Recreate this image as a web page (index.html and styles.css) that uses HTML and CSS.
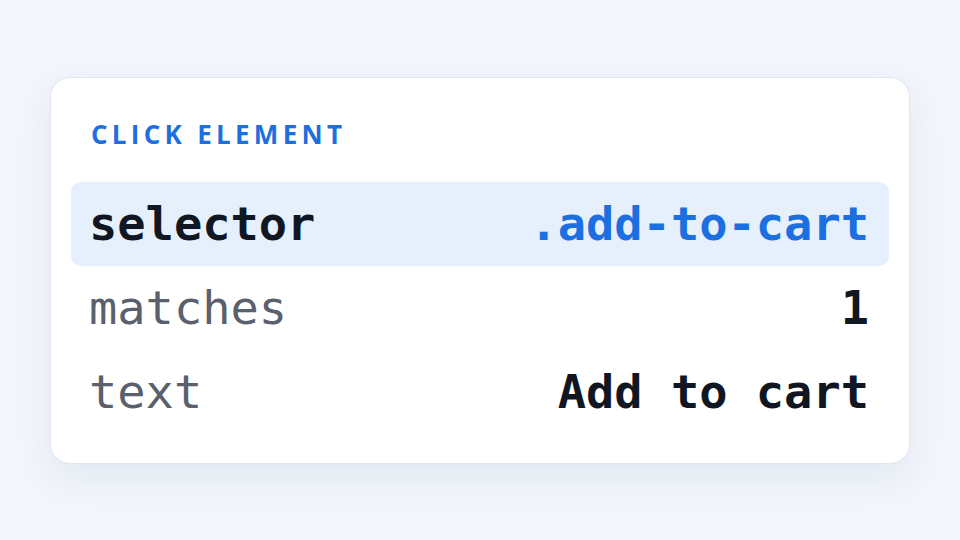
FILE: index.html
```html
<!DOCTYPE html>
<html lang="en">
<head>
<meta charset="utf-8">
<title>Click element</title>
<link rel="stylesheet" href="styles.css">
</head>
<body>
<main class="stage">
  <section class="card">
    <h1 class="title">CLICK ELEMENT</h1>
    <div class="rows">
      <div class="row row-active">
        <span class="key key-strong">selector</span>
        <span class="val val-accent">.add-to-cart</span>
      </div>
      <div class="row">
        <span class="key">matches</span>
        <span class="val">1</span>
      </div>
      <div class="row">
        <span class="key">text</span>
        <span class="val">Add to cart</span>
      </div>
    </div>
  </section>
</main>
</body>
</html>
```

FILE: styles.css
```css
html, body {
  margin: 0;
  padding: 0;
}
body {
  background: #f3f6fc;
  width: 960px;
  height: 540px;
  overflow: hidden;
}
.stage {
  width: 960px;
  height: 540px;
  display: flex;
  align-items: center;
  justify-content: center;
}
.card {
  box-sizing: border-box;
  width: 860px;
  height: 387px;
  background: #ffffff;
  border: 1px solid #e2e5eb;
  border-radius: 20px;
  box-shadow: 0 14px 40px rgba(30, 50, 90, 0.08);
  padding: 40px 20px 29px;
  display: flex;
  flex-direction: column;
}
.title {
  margin: 0 0 32px;
  padding-left: 20px;
  font-family: "Open Sans", "Noto Sans", sans-serif;
  font-weight: 700;
  font-size: 26px;
  line-height: 32px;
  letter-spacing: 0.165em;
  color: #1c6fe0;
}
.rows {
  display: flex;
  flex-direction: column;
}
.row {
  height: 84px;
  display: flex;
  align-items: center;
  justify-content: space-between;
  padding: 0 20px 0 18px;
  border-radius: 10px;
  font-family: "DejaVu Sans Mono", monospace;
  font-size: 47px;
}
.row-active {
  background: #e6f0fc;
}
.key {
  color: #5a606c;
}
.key-strong {
  color: #111722;
  font-weight: 700;
}
.val {
  color: #111722;
  font-weight: 700;
}
.val-accent {
  color: #1c6fe0;
}
```
